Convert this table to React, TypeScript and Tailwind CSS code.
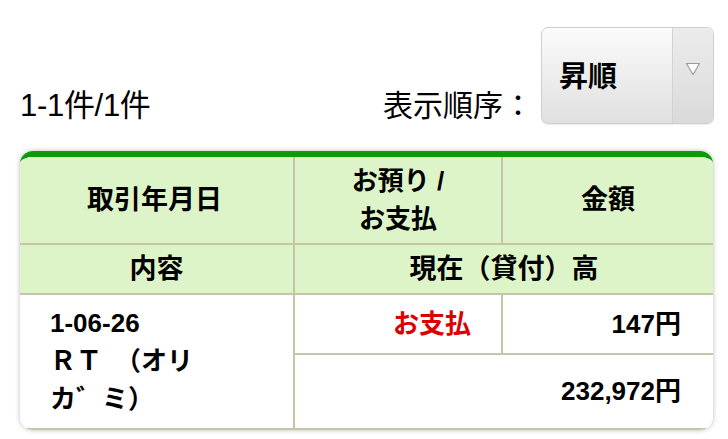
import React from "react";

const font = { fontFamily: '"Liberation Sans", "Noto Sans CJK JP", sans-serif' };

export default function App() {
  const bd = "border-[#c6c6a6]";
  return (
    <div className="w-[728px] h-[439px] bg-white overflow-hidden text-black" style={font}>
      <div className="flex items-end justify-between pl-5 pr-[14px] pt-[27px]">
        <div className="text-[31px] leading-[34px] pb-[1px] tracking-[-0.3px]">1-1件/1件</div>
        <div className="flex items-end">
          <div className="text-[30px] leading-[34px] mr-[8px] pb-[1px]">表示順序：</div>
          <div className="w-[173px] h-[97px] rounded-[7px] border border-[#cfcfcf] bg-gradient-to-b from-[#fbfbfb] to-[#e0e0e0] flex shadow-[0_1px_1px_rgba(0,0,0,0.08)]">
            <div className="flex-1 flex items-center pl-[17px] pt-[4px] text-[29px] font-bold">昇順</div>
            <div className="w-[41px] border-l border-[#d2d2d2] flex justify-center pt-[34px] bg-gradient-to-b from-[#ececec] to-[#dadada] rounded-r-[7px]">
              <svg width="16" height="14" viewBox="0 0 16 14" className="shrink-0">
                <path d="M1.5 1.5 L14.5 1.5 L8 12.5 Z" fill="#ffffff" stroke="#9c9c9c" strokeWidth="1.2" strokeLinejoin="round" />
              </svg>
            </div>
          </div>
        </div>
      </div>

      <div className="ml-5 mr-[15px] mt-[27px] rounded-[13px] overflow-hidden border-t-[6px] border-[#0a9a0a] shadow-[0_0_5px_rgba(0,0,0,0.28)]">
        <div className="grid grid-cols-[275px_208px_1fr] grid-rows-[88px_50px_60px_75px] font-bold">
          <div className={`bg-[#dcf4c7] border-r-2 border-b-2 ${bd} flex items-center justify-center text-[27px] pr-[4px]`}>取引年月日</div>
          <div className={`bg-[#dcf4c7] border-r-2 border-b-2 ${bd} flex flex-col items-center justify-center text-[26px] leading-[38px]`}>
            <span>お預り /</span>
            <span>お支払</span>
          </div>
          <div className={`bg-[#dcf4c7] border-b-2 ${bd} flex items-center justify-center text-[27px]`}>金額</div>

          <div className={`bg-[#dcf4c7] border-r-2 border-b-2 ${bd} flex items-center justify-center text-[27px]`}>内容</div>
          <div className={`col-span-2 bg-[#dcf4c7] border-b-2 ${bd} flex items-center justify-center text-[27px]`}>現在（貸付）高</div>

          <div className={`row-span-2 border-r-2 border-b-2 ${bd} bg-white pl-[30px] pt-[9px] text-[26px] leading-[38px]`}>
            <div>1-06-26</div>
            <div>ＲＴ　（オリ</div>
            <div>カ゛ミ）</div>
          </div>
          <div className={`border-r-2 border-b-2 ${bd} bg-white flex items-center justify-end pr-[30px] text-[26px] text-[#dd0000]`}>お支払</div>
          <div className={`border-b-2 ${bd} bg-white flex items-center justify-end pr-[32px] text-[26px]`}>147円</div>
          <div className={`col-span-2 border-b-2 ${bd} bg-white flex items-center justify-end pr-[32px] text-[26px]`}>232,972円</div>
        </div>
      </div>
    </div>
  );
}
